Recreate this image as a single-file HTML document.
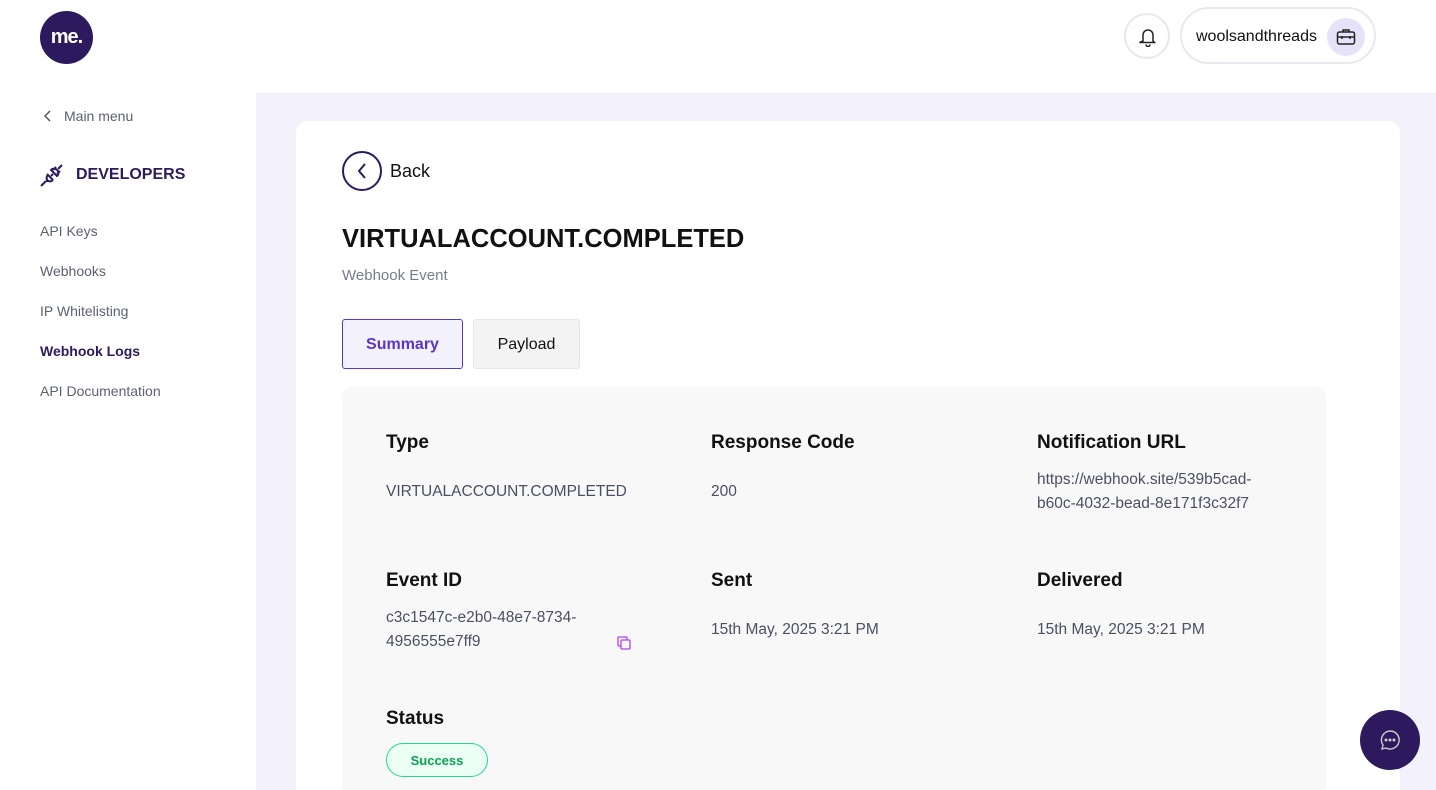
<!DOCTYPE html>
<html><head><style>
*{margin:0;padding:0;box-sizing:border-box}
html,body{width:1436px;height:790px;overflow:hidden}
body{background:#fff;font-family:"Liberation Sans",sans-serif;position:relative;color:#000}
.a{position:absolute}
.side a{position:absolute;left:40px;font-size:14px;color:#5b6170;text-decoration:none}
.h{font-size:19px;font-weight:bold;color:#111}
.v{font-size:15.5px;color:#4a5060;line-height:24px}
</style></head><body>
<div class="a" style="left:40px;top:11px;width:53px;height:53px;border-radius:50%;background:#2d1a5e;color:#fff;font-weight:bold;font-size:20px;text-align:center;line-height:53px;letter-spacing:-1px">me.</div>
<div class="a" style="left:1124px;top:13px;width:46px;height:46px;border-radius:50%;border:2px solid #e8e8ee">
<svg class="a" style="left:13px;top:12px" width="18" height="20" viewBox="0 0 18 20" fill="none" stroke="#222" stroke-width="1.5"><path d="M4 14V8a5 5 0 0 1 10 0v6l1.5 1.5h-15z"/><path d="M7 17.5a2 2 0 0 0 4 0"/></svg></div>
<div class="a" style="left:1180px;top:7px;width:196px;height:57px;border-radius:29px;border:2px solid #e8e8ee">
<span class="a" style="left:14px;top:19px;font-size:16px;color:#111">woolsandthreads</span>
<div class="a" style="left:145px;top:9px;width:38px;height:38px;border-radius:50%;background:#e6e2fa">
<svg class="a" style="left:9px;top:9px" width="20" height="20" viewBox="0 0 20 20" fill="none" stroke="#222" stroke-width="1.5"><rect x="1.5" y="5" width="17" height="12" rx="2"/><path d="M7 5V3h6v2M1.5 10h17M6 9v3M14 9v3"/></svg></div></div>
<div class="side">
<svg class="a" style="left:44px;top:110px" width="8" height="12" viewBox="0 0 8 12" fill="none" stroke="#555" stroke-width="1.5"><path d="M6 1L1 6l5 5"/></svg>
<a style="left:64px;top:108px">Main menu</a>
<svg class="a" style="left:39px;top:162px" width="26" height="26" viewBox="0 0 26 26" fill="none" stroke="#2d1a5e" stroke-width="2"><path d="M2 24l5-5M8 12l6 6M9 13a4 4 0 0 0 0 6l-2 0M14 18a4 4 0 0 1-6 0"/><path d="M12 14l2-2M18 8a4 4 0 0 0-6 0l6 6a4 4 0 0 0 0-6zM19 7l4-4M14 8l3-3M18 12l3-3"/></svg>
<div class="a" style="left:76px;top:166px;font-size:16px;font-weight:bold;color:#2d1a5e">DEVELOPERS</div>
<a style="top:223px">API Keys</a><a style="top:263px">Webhooks</a><a style="top:303px">IP Whitelisting</a>
<a style="top:343px;color:#2d1a5e;font-weight:bold">Webhook Logs</a><a style="top:383px">API Documentation</a>
</div>
<div class="a" style="left:256px;top:93px;width:1180px;height:697px;background:#f3f1fb"></div>
<div class="a" style="left:296px;top:121px;width:1104px;height:669px;background:#fff;border-radius:12px 12px 0 0"></div>
<div class="a" style="left:342px;top:151px;width:40px;height:40px;border-radius:50%;border:2px solid #2d1a5e">
<svg class="a" style="left:13px;top:10px" width="10" height="16" viewBox="0 0 10 16" fill="none" stroke="#2d1a5e" stroke-width="2"><path d="M8 1L2 8l6 7"/></svg></div>
<div class="a" style="left:390px;top:161px;font-size:18px;color:#111">Back</div>
<div class="a" style="left:342px;top:225px;font-size:25.5px;font-weight:bold;color:#111">VIRTUALACCOUNT.COMPLETED</div>
<div class="a" style="left:342px;top:267px;font-size:15px;color:#777c88">Webhook Event</div>
<div class="a" style="left:342px;top:319px;width:121px;height:50px;border:1px solid #5b35c8;border-radius:3px;background:#f3f1fb;color:#5b35c8;font-weight:bold;font-size:16px;text-align:center;line-height:50px">Summary</div>
<div class="a" style="left:473px;top:319px;width:107px;height:50px;border:1px solid #e6e6e6;border-radius:3px;background:#f3f3f3;color:#111;font-size:16px;text-align:center;line-height:50px">Payload</div>
<div class="a" style="left:342px;top:387px;width:984px;height:403px;background:#f8f8f9;border-radius:10px 10px 0 0"></div>
<div class="a h" style="left:386px;top:432px">Type</div>
<div class="a h" style="left:711px;top:432px">Response Code</div>
<div class="a h" style="left:1037px;top:432px">Notification URL</div>
<div class="a v" style="left:386px;top:480px">VIRTUALACCOUNT.COMPLETED</div>
<div class="a v" style="left:711px;top:480px">200</div>
<div class="a v" style="left:1037px;top:468px">https://webhook.site/539b5cad-<br>b60c-4032-bead-8e171f3c32f7</div>
<div class="a h" style="left:386px;top:570px">Event ID</div>
<div class="a h" style="left:711px;top:570px">Sent</div>
<div class="a h" style="left:1037px;top:570px">Delivered</div>
<div class="a v" style="left:386px;top:606px">c3c1547c-e2b0-48e7-8734-<br>4956555e7ff9</div>
<svg class="a" style="left:617px;top:636px" width="15" height="15" viewBox="0 0 15 15" fill="none" stroke="#b040f0" stroke-width="1.3"><rect x="1" y="1" width="9" height="9" rx="1"/><rect x="4" y="4" width="9" height="9" rx="1" fill="#f8f8f9"/></svg>
<div class="a v" style="left:711px;top:618px">15th May, 2025 3:21 PM</div>
<div class="a v" style="left:1037px;top:618px">15th May, 2025 3:21 PM</div>
<div class="a h" style="left:386px;top:708px">Status</div>
<div class="a" style="left:386px;top:743px;width:102px;height:34px;border-radius:17px;border:1px solid #22d98a;background:#ecfff5;color:#0aa24f;font-weight:bold;font-size:13px;text-align:center;line-height:33px">Success</div>
<div class="a" style="left:1360px;top:710px;width:60px;height:60px;border-radius:50%;background:#2d1a5e">
<svg class="a" style="left:19px;top:19px" width="22" height="22" viewBox="0 0 22 22" fill="none" stroke="#ccc" stroke-width="1.4"><path d="M11 2a9 9 0 1 1-4 17l-4 1 1-4A9 9 0 0 1 11 2z"/><circle cx="7" cy="11" r=".8" fill="#ccc"/><circle cx="11" cy="11" r=".8" fill="#ccc"/><circle cx="15" cy="11" r=".8" fill="#ccc"/></svg></div>
</body></html>
